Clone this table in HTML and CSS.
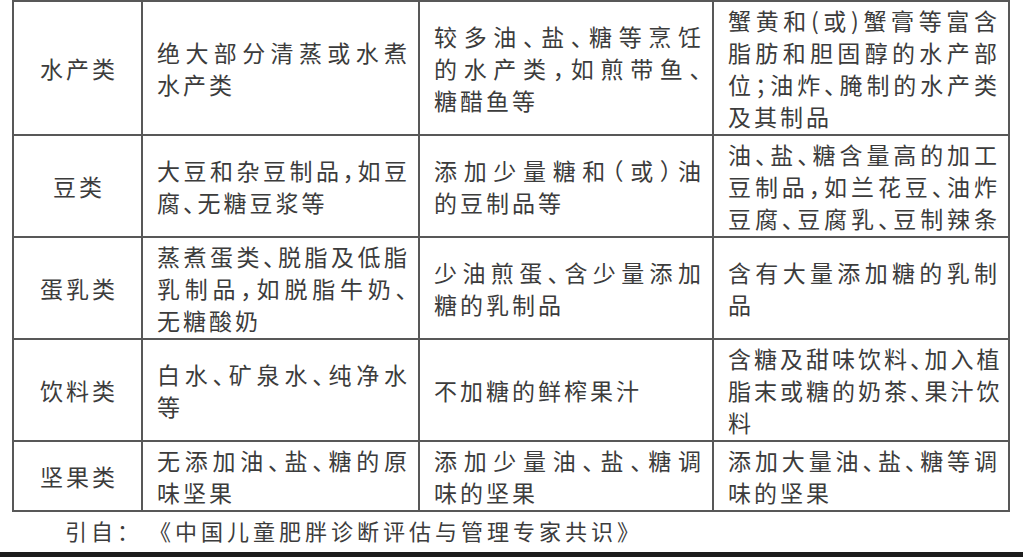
FILE: index.html
```html
<!DOCTYPE html>
<html lang="zh-CN">
<head>
<meta charset="utf-8">
<title>儿童食物选择建议</title>
<link rel="stylesheet" href="styles.css">
</head>
<body>
<main class="page">
  <table class="food">
    <colgroup><col class="c1"><col class="c2"><col class="c3"><col class="c4"></colgroup>
    <tbody>
      <tr>
        <th>水产类</th>
        <td><span class="ln">绝大部分清蒸或水煮</span><span class="end">水产类</span></td>
        <td><span class="ln">较多油、盐、糖等烹饪</span><span class="ln">的水产类，如煎带鱼、</span><span class="end">糖醋鱼等</span></td>
        <td><span class="ln">蟹黄和(或)蟹膏等富含</span><span class="ln">脂肪和胆固醇的水产部</span><span class="ln">位；油炸、腌制的水产类</span><span class="end">及其制品</span></td>
      </tr>
      <tr>
        <th>豆类</th>
        <td><span class="ln">大豆和杂豆制品，如豆</span><span class="end">腐、无糖豆浆等</span></td>
        <td><span class="ln">添加少量糖和（或）油</span><span class="end">的豆制品等</span></td>
        <td><span class="ln">油、盐、糖含量高的加工</span><span class="ln">豆制品，如兰花豆、油炸</span><span class="ln">豆腐、豆腐乳、豆制辣条</span></td>
      </tr>
      <tr>
        <th>蛋乳类</th>
        <td><span class="ln">蒸煮蛋类、脱脂及低脂</span><span class="ln">乳制品，如脱脂牛奶、</span><span class="end">无糖酸奶</span></td>
        <td><span class="ln">少油煎蛋、含少量添加</span><span class="end">糖的乳制品</span></td>
        <td><span class="ln">含有大量添加糖的乳制</span><span class="end">品</span></td>
      </tr>
      <tr>
        <th>饮料类</th>
        <td><span class="ln">白水、矿泉水、纯净水</span><span class="end">等</span></td>
        <td><span class="end">不加糖的鲜榨果汁</span></td>
        <td><span class="ln">含糖及甜味饮料、加入植</span><span class="ln">脂末或糖的奶茶、果汁饮</span><span class="end">料</span></td>
      </tr>
      <tr>
        <th>坚果类</th>
        <td><span class="ln">无添加油、盐、糖的原</span><span class="end">味坚果</span></td>
        <td><span class="ln">添加少量油、盐、糖调</span><span class="end">味的坚果</span></td>
        <td><span class="ln">添加大量油、盐、糖等调</span><span class="end">味的坚果</span></td>
      </tr>
    </tbody>
  </table>
  <p class="cite">引自：<span class="book">《中国儿童肥胖诊断评估与管理专家共识》</span></p>
  <div class="rule"></div>
</main>
</body>
</html>
```

FILE: styles.css
```css
* {
  box-sizing: border-box;
}

html,
body {
  margin: 0;
  padding: 0;
  background: #ffffff;
}

body {
  width: 1023px;
  height: 557px;
  overflow: hidden;
  font-family: "Noto Sans CJK SC", "Noto Sans", sans-serif;
  color: #3c3c3c;
  text-spacing-trim: space-all;
}

.page {
  display: flex;
  flex-direction: column;
  height: 557px;
}

.food {
  border-collapse: collapse;
  table-layout: fixed;
  width: 996px;
  margin: 0 0 0 12px;
  font-size: 23px;
  font-weight: 400;
  line-height: 32px;
  letter-spacing: 3px;
  font-feature-settings: "halt";
}

.c1 { width: 129px; }
.c2 { width: 277px; }
.c3 { width: 294px; }
.c4 { width: 296px; }

.food th,
.food td {
  border: 2px solid #585858;
  vertical-align: middle;
  padding: 2px 8px 2px 14px;
}

.food th {
  font-weight: 400;
  text-align: center;
  padding: 2px 0 2px 3px;
}

.ln {
  display: block;
  white-space: nowrap;
  text-align: justify;
  text-align-last: justify;
}

.end {
  display: block;
  white-space: nowrap;
  text-align: left;
}

.cite {
  margin: 2px 0 0 65px;
  font-size: 22px;
  font-weight: 400;
  line-height: 32px;
  letter-spacing: 4px;
}

.book {
  margin-left: 6px;
}

.rule {
  margin-top: auto;
  height: 5px;
  background: #1c1c1c;
}
```
